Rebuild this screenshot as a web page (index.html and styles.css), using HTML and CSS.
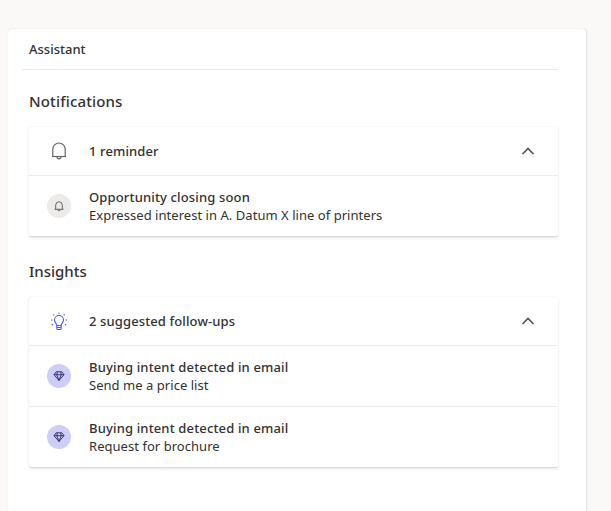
FILE: index.html
```html
<!DOCTYPE html>
<html lang="en">
<head>
<meta charset="utf-8">
<title>Assistant</title>
<link rel="stylesheet" href="styles.css">
</head>
<body>
<main class="panel">
  <header class="panel-head"><span>Assistant</span></header>
  <div class="content">
    <h2 class="section-title first">Notifications</h2>
    <section class="card">
      <div class="card-head">
        <span class="icon-slot">
          <svg width="20" height="20" viewBox="0 0 20 20" fill="none" stroke="#666" stroke-width="1.2"><path d="M3.800 15V8.200a6.200 6.200 0 0 1 12.400 0V15"/><path d="M3 15.500h14"/><path d="M8 15.800a2 2 0 0 0 4 0"/></svg>
        </span>
        <span class="head-label">1 reminder</span>
        <svg class="chevron" width="14" height="14" viewBox="0 0 14 14" fill="none" stroke="#555" stroke-width="1.7"><path d="M1.500 10 7 4.500l5.500 5.500"/></svg>
      </div>
      <div class="row">
        <span class="icon-slot"><span class="badge grey">
          <svg width="12" height="12" viewBox="0 0 20 20" fill="none" stroke="#555" stroke-width="1.500"><path d="M4.500 15.500V8.500a5.500 5.500 0 0 1 11 0v7"/><path d="M2.500 15.500h15"/><path d="M8 16a2 2 0 0 0 4 0"/></svg>
        </span></span>
        <div class="row-text"><div class="row-title">Opportunity closing soon</div><div class="row-sub">Expressed interest in A. Datum X line of printers</div></div>
      </div>
    </section>
    <h2 class="section-title">Insights</h2>
    <section class="card">
      <div class="card-head">
        <span class="icon-slot">
          <svg width="20" height="20" viewBox="0 0 20 20" fill="none" stroke="#3f5fe8" stroke-width="1.100"><path d="M7.800 14.500c0-2-2.300-2.800-2.300-5.500a4.500 4.500 0 0 1 9 0c0 2.700-2.300 3.500-2.300 5.500z"/><path d="M7.800 14.500v3a1 1 0 0 0 1 1h2.400a1 1 0 0 0 1-1v-3M7.800 16.500h4.400"/><path d="M10 1.800v1.200M4.400 3.400l.9.9M15.600 3.400l-.9.9M2 9h1.400M16.600 9h1.400M2.800 14.200l1.100-.9M17.200 14.200l-1.100-.9"/></svg>
        </span>
        <span class="head-label">2 suggested follow-ups</span>
        <svg class="chevron" width="14" height="14" viewBox="0 0 14 14" fill="none" stroke="#555" stroke-width="1.7"><path d="M1.500 10 7 4.500l5.500 5.500"/></svg>
      </div>
      <div class="row">
        <span class="icon-slot"><span class="badge violet">
          <svg width="12" height="12" viewBox="0 0 12 12" fill="none" stroke="#35356e" stroke-width="1"><path d="M3.200 1.800h5.600L11 4.700 6 10.500 1 4.700z"/><path d="M1 4.700h10M4.300 1.800 3.800 4.700 6 10.500l2.200-5.800-.5-2.900"/></svg>
        </span></span>
        <div class="row-text"><div class="row-title">Buying intent detected in email</div><div class="row-sub">Send me a price list</div></div>
      </div>
      <div class="row">
        <span class="icon-slot"><span class="badge violet">
          <svg width="12" height="12" viewBox="0 0 12 12" fill="none" stroke="#35356e" stroke-width="1"><path d="M3.200 1.800h5.600L11 4.700 6 10.500 1 4.700z"/><path d="M1 4.700h10M4.300 1.800 3.800 4.700 6 10.500l2.200-5.800-.5-2.900"/></svg>
        </span></span>
        <div class="row-text"><div class="row-title">Buying intent detected in email</div><div class="row-sub">Request for brochure</div></div>
      </div>
    </section>
  </div>
</main>
</body>
</html>
```
FILE: styles.css
```css
html, body { height: 100%; }
body {
  margin: 0;
  padding: 29px 25px 0 8px;
  box-sizing: border-box;
  height: 511px;
  overflow: hidden;
  background: #faf9f8;
  color: #323130;
  font-family: "Noto Sans", "Open Sans", sans-serif;
}
.panel {
  background: #fff;
  height: 100%;
  border-radius: 4px 4px 0 0;
  box-shadow: 1px 0 2px rgba(0,0,0,.1), 0 0 1px rgba(0,0,0,.05);
  padding: 0 28px 0 14px;
}
.panel-head {
  height: 40px;
  padding-left: 7px;
  display: flex;
  align-items: center;
  font-size: 13px;
  font-weight: 500;
  border-bottom: 1px solid #edebe9;
}
.content { padding-left: 7px; }
.section-title {
  margin: 0;
  font-size: 15px;
  font-weight: 500;
  line-height: 20px;
  padding-top: 24.500px;
  padding-bottom: 16.500px;
}
.section-title.first { padding-top: 21px; padding-bottom: 16px; letter-spacing: .15px; }
.card {
  background: #fff;
  border-radius: 2px;
  box-shadow: 0 1.600px 3.600px rgba(0,0,0,.1), 0 .3px .9px rgba(0,0,0,.08);
}
.card-head {
  height: 48px;
  display: flex;
  align-items: center;
  font-size: 13px;
  font-weight: 500;
}
.head-label { flex: 1; letter-spacing: .12px; }
.icon-slot {
  width: 60px;
  flex: none;
  display: flex;
  align-items: center;
  justify-content: center;
}
.chevron { margin-right: 23px; }
.row {
  height: 60px;
  display: flex;
  align-items: center;
  border-top: 1px solid #edebe9;
}
.badge {
  width: 24px;
  height: 24px;
  border-radius: 50%;
  display: flex;
  align-items: center;
  justify-content: center;
}
.badge.grey { background: #edebe9; }
.badge.violet { background: #cdcdf8; }
.row-text { font-size: 13px; line-height: 18px; }
.row-title { font-weight: 500; letter-spacing: .15px; }
.row-sub { font-weight: 400; letter-spacing: .04px; }
```
